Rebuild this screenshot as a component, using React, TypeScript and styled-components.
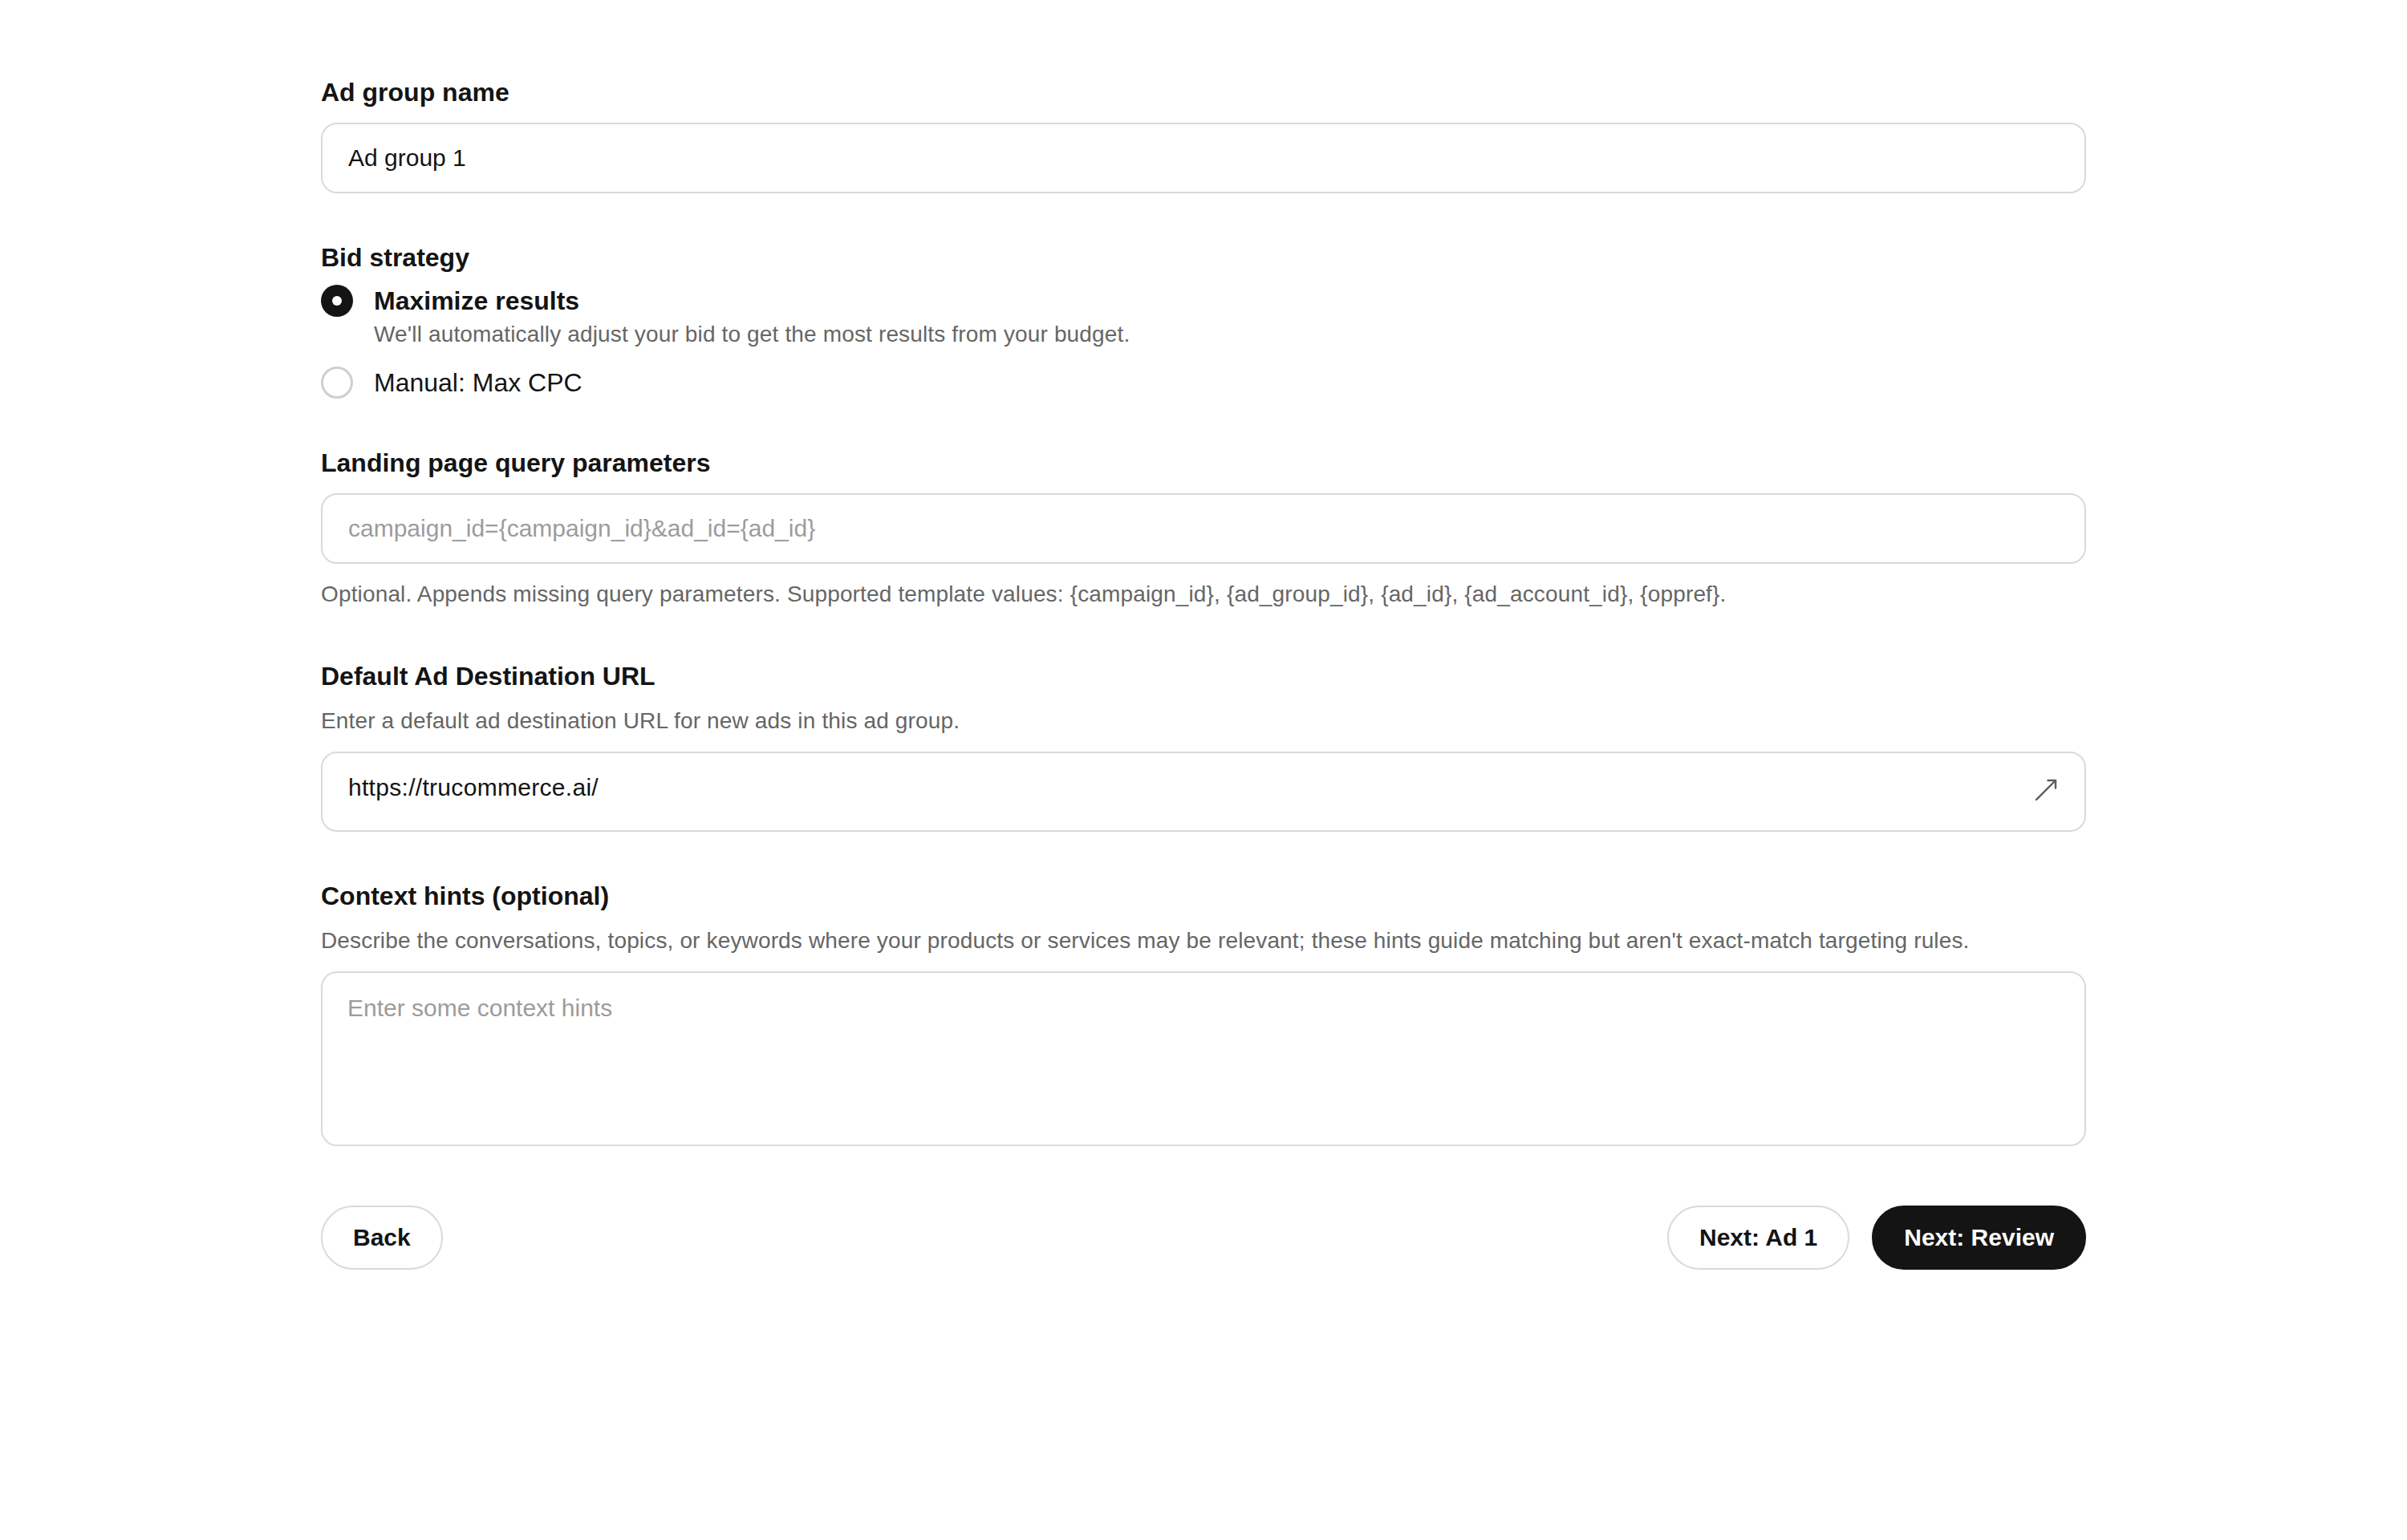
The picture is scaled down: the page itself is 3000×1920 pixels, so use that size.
import styled, { createGlobalStyle } from 'styled-components';

const GlobalStyle = createGlobalStyle`
  html, body {
    margin: 0;
    padding: 0;
    background: #ffffff;
  }

  body {
    font-family: 'Liberation Sans', Arial, Helvetica, sans-serif;
    color: #141414;
  }

  * {
    box-sizing: border-box;
  }
`;

const App = () => {
  return (
    <>
      <GlobalStyle />
      <Page>
        <Form>
          <Section>
            <Label>Ad group name</Label>
            <TextInput defaultValue='Ad group 1' />
          </Section>

          <Section>
            <Label tight>Bid strategy</Label>
            <RadioGroup>
              <RadioOption>
                <RadioRow>
                  <Radio checked />
                  <RadioTitle strong>Maximize results</RadioTitle>
                </RadioRow>
                <RadioHint>
                  We'll automatically adjust your bid to get the most results
                  from your budget.
                </RadioHint>
              </RadioOption>
              <RadioOption>
                <RadioRow>
                  <Radio />
                  <RadioTitle>Manual: Max CPC</RadioTitle>
                </RadioRow>
              </RadioOption>
            </RadioGroup>
          </Section>

          <Section>
            <Label>Landing page query parameters</Label>
            <TextInput placeholder='campaign_id={campaign_id}&ad_id={ad_id}' />
            <HelpBelow>
              Optional. Appends missing query parameters. Supported template
              values: {'{campaign_id}'}, {'{ad_group_id}'}, {'{ad_id}'},{' '}
              {'{ad_account_id}'}, {'{oppref}'}.
            </HelpBelow>
          </Section>

          <Section>
            <Label>Default Ad Destination URL</Label>
            <HelpAbove>
              Enter a default ad destination URL for new ads in this ad group.
            </HelpAbove>
            <UrlField>
              <UrlInput defaultValue='https://trucommerce.ai/' />
              <OpenIcon viewBox='0 0 28 28' fill='none'>
                <path d='M2 26 L26 2' />
                <path d='M16.5 2 H26 V11.5' />
              </OpenIcon>
            </UrlField>
          </Section>

          <Section>
            <Label>Context hints (optional)</Label>
            <HelpAbove>
              Describe the conversations, topics, or keywords where your
              products or services may be relevant; these hints guide matching
              but aren't exact-match targeting rules.
            </HelpAbove>
            <TextArea placeholder='Enter some context hints' />
          </Section>
        </Form>

        <Footer>
          <Button>Back</Button>
          <FooterRight>
            <Button>Next: Ad 1</Button>
            <Button primary>Next: Review</Button>
          </FooterRight>
        </Footer>
      </Page>
    </>
  );
};

const Page = styled.main`
  width: 2200px;
  margin: 0 auto;
  padding-top: 93px;
  padding-bottom: 120px;
`;

const Form = styled.div`
  display: flex;
  flex-direction: column;
  gap: 58px;
`;

const Section = styled.section`
  display: flex;
  flex-direction: column;
`;

const Label = styled.label<{ tight?: boolean }>`
  font-size: 32px;
  line-height: 44px;
  font-weight: 700;
  color: #141414;
  margin-bottom: ${({ tight }) => (tight ? '12px' : '16px')};
`;

const fieldBase = `
  width: 100%;
  border: 2px solid #dadada;
  border-radius: 20px;
  background: #ffffff;
  font-family: 'Liberation Sans', Arial, Helvetica, sans-serif;
  font-size: 30px;
  color: #141414;
  outline: none;

  &::placeholder {
    color: #9c9c9c;
  }
`;

const TextInput = styled.input`
  ${fieldBase}
  height: 88px;
  padding: 0 32px;
`;

const helpText = `
  font-size: 28px;
  line-height: 40px;
  letter-spacing: 0.15px;
  color: #666666;
`;

const HelpAbove = styled.p`
  ${helpText}
  margin: -2px 0 18px;
`;

const HelpBelow = styled.p`
  ${helpText}
  margin: 18px 0 2px;
`;

const UrlField = styled.div`
  ${fieldBase}
  height: 100px;
  display: flex;
  align-items: center;
  padding: 0 34px 10px 32px;
  gap: 24px;
`;

const UrlInput = styled.input`
  flex: 1;
  border: none;
  outline: none;
  padding: 0;
  background: transparent;
  font-family: inherit;
  font-size: 30px;
  letter-spacing: 0.3px;
  color: #141414;
`;

const OpenIcon = styled.svg`
  width: 28px;
  height: 28px;
  flex-shrink: 0;
  margin-top: 6px;
  stroke: #5c5c5c;
  stroke-width: 2.4;
  stroke-linecap: round;
  stroke-linejoin: round;
`;

const TextArea = styled.textarea`
  ${fieldBase}
  height: 218px;
  padding: 22px 31px;
  line-height: 44px;
  resize: none;
`;

const RadioGroup = styled.div`
  display: flex;
  flex-direction: column;
  gap: 22px;
`;

const RadioOption = styled.div`
  display: flex;
  flex-direction: column;
`;

const RadioRow = styled.div`
  display: flex;
  align-items: center;
  gap: 26px;
  height: 40px;
`;

const Radio = styled.span<{ checked?: boolean }>`
  width: 40px;
  height: 40px;
  border-radius: 50%;
  flex-shrink: 0;
  display: flex;
  align-items: center;
  justify-content: center;
  background: ${({ checked }) => (checked ? '#141414' : '#ffffff')};
  border: ${({ checked }) => (checked ? 'none' : '3px solid #cfcfcf')};

  &::after {
    content: '';
    display: ${({ checked }) => (checked ? 'block' : 'none')};
    width: 12px;
    height: 12px;
    border-radius: 50%;
    background: #ffffff;
  }
`;

const RadioTitle = styled.span<{ strong?: boolean }>`
  font-size: 32px;
  line-height: 40px;
  font-weight: ${({ strong }) => (strong ? 700 : 400)};
  color: #141414;
`;

const RadioHint = styled.p`
  ${helpText}
  margin: 4px 0 0 66px;
  line-height: 36px;
`;

const Footer = styled.div`
  display: flex;
  justify-content: space-between;
  align-items: center;
  margin-top: 74px;
`;

const FooterRight = styled.div`
  display: flex;
  gap: 28px;
`;

const Button = styled.button<{ primary?: boolean }>`
  height: 80px;
  padding: 0 38px;
  border-radius: 40px;
  border: 2px solid ${({ primary }) => (primary ? '#141414' : '#dadada')};
  background: ${({ primary }) => (primary ? '#141414' : '#ffffff')};
  color: ${({ primary }) => (primary ? '#ffffff' : '#141414')};
  font-family: 'Liberation Sans', Arial, Helvetica, sans-serif;
  font-size: 30px;
  font-weight: 700;
  cursor: pointer;
`;

export default App;
